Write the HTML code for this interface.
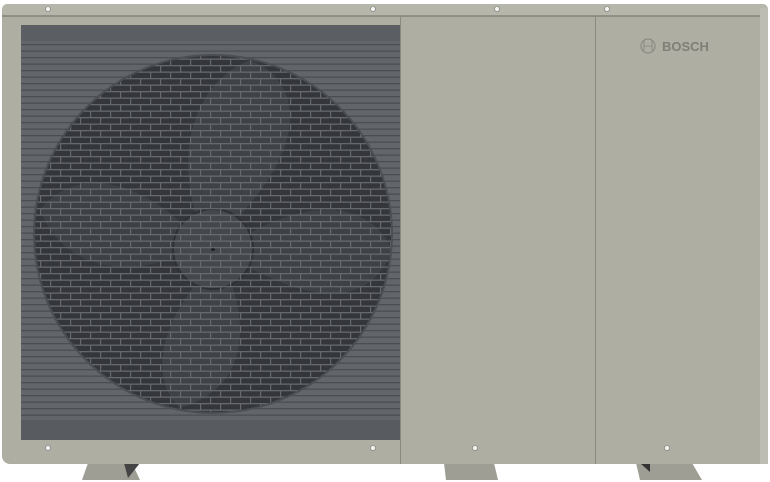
<!DOCTYPE html>
<html><head><style>
html,body{margin:0;padding:0;background:#fff;width:770px;height:482px;overflow:hidden}
</style></head><body>
<svg width="770" height="482" viewBox="0 0 770 482" xmlns="http://www.w3.org/2000/svg">
<defs>
<pattern id="h" width="8" height="6.5" patternUnits="userSpaceOnUse"><rect width="8" height="6.5" fill="#62656a"/><rect y="5" width="8" height="1.3" fill="#4a4d52"/></pattern>
<pattern id="b" width="20" height="13" patternUnits="userSpaceOnUse"><rect y="0" width="20" height="1.3" fill="#6a6d72"/><rect y="6.5" width="20" height="1.3" fill="#6a6d72"/><rect x="0" y="0" width="1.2" height="6.5" fill="#6a6d72"/><rect x="10" y="6.5" width="1.2" height="6.5" fill="#6a6d72"/></pattern>
<clipPath id="c"><circle cx="213" cy="234" r="179"/></clipPath>
</defs>
<path d="M82 480 L88 463 L132 463 L140 480Z" fill="#9e9e94"/>
<path d="M124 463 L140 463 L128 478Z" fill="#444"/>
<path d="M446 480 L444 463 L494 463 L498 480Z" fill="#9e9e94"/>
<path d="M640 480 L636 463 L692 463 L702 480Z" fill="#9e9e94"/>
<path d="M640 463 L650 463 L650 472Z" fill="#333"/>
<rect x="2" y="4" width="766" height="460" rx="8" fill="#aeaea2"/>
<rect x="2" y="4" width="766" height="12" rx="5" fill="#b6b6ab"/>
<line x1="2" y1="16" x2="768" y2="16" stroke="#6c6c64" stroke-width="1"/>
<line x1="400.5" y1="16" x2="400.5" y2="464" stroke="#8a8a80"/>
<line x1="595.5" y1="16" x2="595.5" y2="464" stroke="#8a8a80"/>
<rect x="760" y="8" width="8" height="456" fill="#bdbdb3"/>
<rect x="21" y="25" width="379" height="415" fill="url(#h)"/>
<rect x="21" y="25" width="379" height="16" fill="#5b5e63"/>
<rect x="21" y="420" width="379" height="20" fill="#585b60"/>
<circle cx="213" cy="234" r="179" fill="#34363a"/>
<g clip-path="url(#c)">
<path d="M195 212 C175 140 200 80 250 60 C300 80 310 140 240 215Z" fill="#3f4246"/>
<path d="M252 232 C310 200 370 200 392 250 C370 310 310 300 250 268Z" fill="#3e4145"/>
<path d="M232 285 C250 340 240 390 180 408 C150 380 160 330 195 285Z" fill="#3f4246"/>
<path d="M175 258 C110 280 60 260 40 210 C70 170 130 175 180 222Z" fill="#3d4044"/>
<circle cx="213" cy="249" r="40" fill="#44474b" stroke="#2e3034" stroke-width="2"/>
<circle cx="213" cy="249" r="2" fill="#1e1f22"/>
<rect x="30" y="50" width="370" height="370" fill="url(#b)" opacity="0.9"/>
</g>
<circle cx="213" cy="234" r="179" fill="none" stroke="#4b4e52" stroke-width="2"/>
<g fill="#f4f4f0" stroke="#777" stroke-width="0.6">
<circle cx="48" cy="9" r="2.5"/><circle cx="373" cy="9" r="2.5"/><circle cx="497" cy="9" r="2.5"/><circle cx="607" cy="9" r="2.5"/>
<circle cx="48" cy="448" r="2.5"/><circle cx="373" cy="448" r="2.5"/><circle cx="475" cy="448" r="2.5"/><circle cx="667" cy="448" r="2.5"/>
</g>
<circle cx="648" cy="46" r="7" fill="none" stroke="#8d8d85" stroke-width="1.3"/>
<path d="M644 41 V51 M652 41 V51 M644 46 H652" stroke="#8d8d85" stroke-width="1.1" fill="none"/>
<text x="662" y="51" font-family="Liberation Sans, sans-serif" font-weight="bold" font-size="13" fill="#7f7f78">BOSCH</text>
</svg>
</body></html>
